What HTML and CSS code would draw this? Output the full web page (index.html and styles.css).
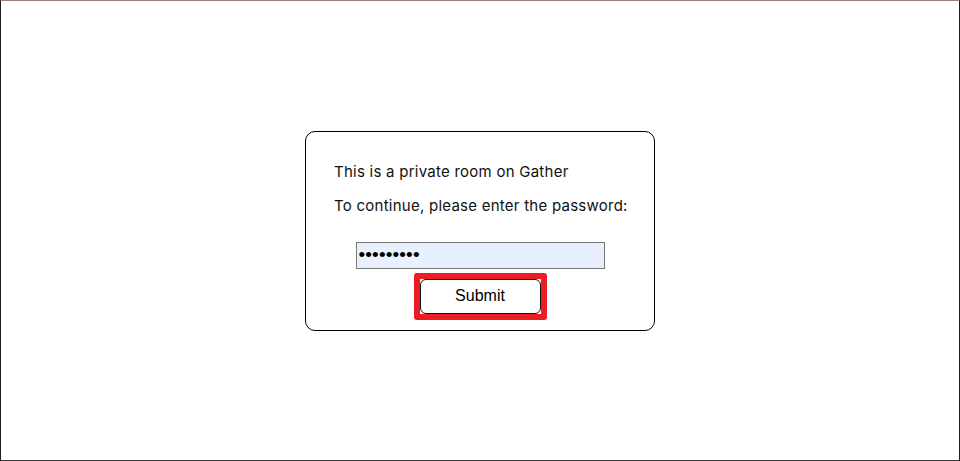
FILE: index.html
```html
<!DOCTYPE html>
<html>
<head>
<meta charset="utf-8">
<link rel="stylesheet" href="styles.css">
</head>
<body>
<div class="frame">
  <div class="card">
    <p class="line first">This is a private room on Gather</p>
    <p class="line second">To continue, please enter the password:</p>
    <form class="form">
      <input class="pw" type="password" value="123456789">
      <span class="highlight"><button class="submit" type="button">Submit</button></span>
    </form>
  </div>
</div>
</body>
</html>
```
FILE: styles.css
```css
html, body {
  margin: 0;
  padding: 0;
  background: #fff;
}
.frame {
  box-sizing: border-box;
  width: 960px;
  height: 461px;
  border-top: 1px solid #9c827a;
  border-left: 1px solid #1c1c1c;
  border-right: 1px solid #1c1c1c;
  border-bottom: 1px solid #3a3a3a;
  display: flex;
  align-items: center;
  justify-content: center;
}
.card {
  box-sizing: border-box;
  width: 350px;
  height: 200px;
  border: 1px solid #000;
  border-radius: 10px;
  padding: 30px 28px 0 28px;
  font-family: Inter, "Noto Sans", sans-serif;
  font-size: 15px;
  letter-spacing: 0.25px;
  color: #111;
}
.line {
  margin: 0;
  line-height: 20px;
  white-space: nowrap;
}
.second {
  margin-top: 14px;
}
.form {
  margin-top: 26px;
  display: flex;
  flex-direction: column;
  align-items: center;
}
.pw {
  box-sizing: border-box;
  width: 249px;
  height: 27px;
  margin: 0;
  padding: 0 2px;
  border: 1px solid #767676;
  background-color: #e8f0fe;
  font-family: Arial, "Liberation Sans", sans-serif;
  font-size: 19px;
  letter-spacing: 0.15px;
  color: #000;
  outline: none;
}
.highlight {
  display: block;
  margin-top: 4px;
  border: 6px solid #ed1c24;
  border-radius: 3px;
  background: #fff;
  line-height: 0;
}
.submit {
  box-sizing: border-box;
  width: 121px;
  height: 35px;
  margin: 0;
  padding: 0;
  border: 1px solid #111;
  border-radius: 6px;
  background: #fff;
  font-family: Arial, "Liberation Sans", sans-serif;
  font-size: 16px;
  letter-spacing: 0;
  color: #000;
}
```
